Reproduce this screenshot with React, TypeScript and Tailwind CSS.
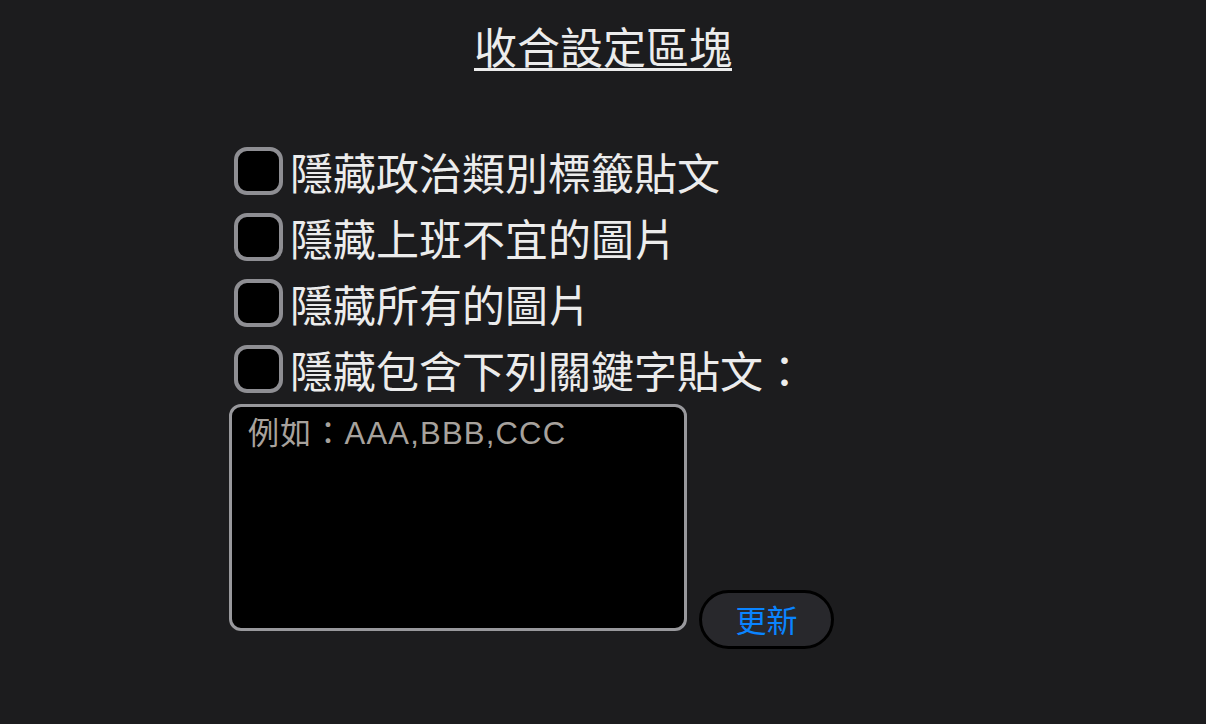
const font = {
  fontFamily: '"Noto Sans CJK TC", "Noto Sans", sans-serif',
};

const latinFont = {
  fontFamily: '"Liberation Sans", "Noto Sans CJK TC", sans-serif',
};

const options = [
  "隱藏政治類別標籤貼文",
  "隱藏上班不宜的圖片",
  "隱藏所有的圖片",
  "隱藏包含下列關鍵字貼文：",
];

function Check({ label }: { label: string }) {
  return (
    <label className="flex items-center h-[66px] cursor-pointer">
      <span className="w-[49px] h-[48px] shrink-0 rounded-[13px] border-[4px] border-[#8e8e93] bg-black" />
      <span className="ml-[7px] text-[43px] leading-none text-[#ececec]">
        {label}
      </span>
    </label>
  );
}

export default function App() {
  return (
    <div className="min-h-[724px] w-full bg-[#1c1c1e] pt-[13px]" style={font}>
      <h1 className="text-center text-[43px] leading-[64px] text-[#ececec] underline underline-offset-[4px] decoration-[2.5px]">
        收合設定區塊
      </h1>

      <div className="w-[748px] mx-auto mt-[61px]">
        <div className="pl-[5px]">
          {options.map((o) => (
            <Check key={o} label={o} />
          ))}
        </div>

        <div className="flex items-end mt-[2px]">
          <textarea
            placeholder="例如：AAA,BBB,CCC"
            className="w-[458px] h-[227px] bg-black rounded-[12px] border-[3px] border-[#98989c] px-[16px] py-[6px] text-[31px] leading-[42px] tracking-[1.2px] text-[#ececec] placeholder:text-[#a7a29d] resize-none outline-none"
            style={latinFont}
          />
          <button className="ml-[12px] mb-[-18px] w-[135px] h-[59px] rounded-full border-[3px] border-black bg-[#28282c] text-[#0a84ff] text-[31px] leading-none pb-[3px]">
            更新
          </button>
        </div>
      </div>
    </div>
  );
}
